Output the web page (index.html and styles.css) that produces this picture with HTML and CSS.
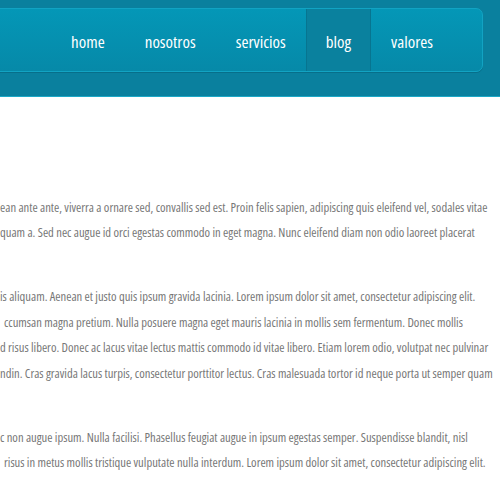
FILE: index.html
```html
<!DOCTYPE html>
<html lang="es">
<head>
<meta charset="utf-8">
<title>Blog</title>
<link rel="stylesheet" href="styles.css">
</head>
<body>
<header class="site-header">
  <nav class="menu">
    <ul class="menu-list">
      <li class="menu-item"><a href="#">home</a></li>
      <li class="menu-item"><a href="#">nosotros</a></li>
      <li class="menu-item"><a href="#">servicios</a></li>
      <li class="menu-item is-active"><a href="#">blog</a></li>
      <li class="menu-item"><a href="#">valores</a></li>
    </ul>
  </nav>
</header>
<main class="content">
  <p class="post-text">
    <span class="ln">ean ante ante, viverra a ornare sed, convallis sed est. Proin felis sapien, adipiscing quis eleifend vel, sodales vitae</span>
    <span class="ln">quam a. Sed nec augue id orci egestas commodo in eget magna. Nunc eleifend diam non odio laoreet placerat</span>
  </p>
  <p class="post-text">
    <span class="ln">is aliquam. Aenean et justo quis ipsum gravida lacinia. Lorem ipsum dolor sit amet, consectetur adipiscing elit.</span>
    <span class="ln gap">ccumsan magna pretium. Nulla posuere magna eget mauris lacinia in mollis sem fermentum. Donec mollis</span>
    <span class="ln">d risus libero. Donec ac lacus vitae lectus mattis commodo id vitae libero. Etiam lorem odio, volutpat nec pulvinar</span>
    <span class="ln">ndin. Cras gravida lacus turpis, consectetur porttitor lectus. Cras malesuada tortor id neque porta ut semper quam</span>
  </p>
  <p class="post-text">
    <span class="ln">c non augue ipsum. Nulla facilisi. Phasellus feugiat augue in ipsum egestas semper. Suspendisse blandit, nisl</span>
    <span class="ln gap">risus in metus mollis tristique vulputate nulla interdum. Lorem ipsum dolor sit amet, consectetur adipiscing elit.</span>
  </p>
</main>
</body>
</html>
```
FILE: styles.css
```css
html, body {
  margin: 0;
  padding: 0;
  background: #ffffff;
  overflow: hidden;
}

body {
  font-family: "Open Sans", "Liberation Sans", sans-serif;
  font-stretch: 75%;
}

.site-header {
  box-sizing: border-box;
  height: 97px;
  padding: 8px 17px 0 0;
  background: #0a809e;
  border-bottom: 1px solid #1ba8c7;
  display: flex;
  justify-content: flex-end;
  align-items: flex-start;
}

.menu {
  flex: 1;
  margin-left: -12px;
  background: linear-gradient(#0497b7, #0689a8);
  border: 1px solid #12a3c3;
  border-radius: 7px;
  box-shadow: 0 1px 0 rgba(0, 60, 80, 0.25);
}

.menu-list {
  list-style: none;
  margin: 0;
  padding: 0 29px 0 0;
  display: flex;
  justify-content: flex-end;
}

.menu-item a {
  display: block;
  padding: 4px 20px 0 20px;
  line-height: 58px;
  color: #ffffff;
  text-decoration: none;
  font-size: 17px;
  font-weight: 500;
  font-stretch: 75%;
}

.menu-item.is-active a {
  background: #0a819e;
  box-shadow: inset 1px 0 0 #077590, inset -1px 0 0 #077590;
}

.content {
  padding-top: 97.5px;
}

.post-text {
  margin: 0 0 39px 0;
  color: #777777;
  font-size: 12.6px;
  font-weight: 500;
  line-height: 25.4px;
  white-space: nowrap;
}

.ln {
  display: block;
}

.ln.gap {
  padding-left: 4px;
}
```
